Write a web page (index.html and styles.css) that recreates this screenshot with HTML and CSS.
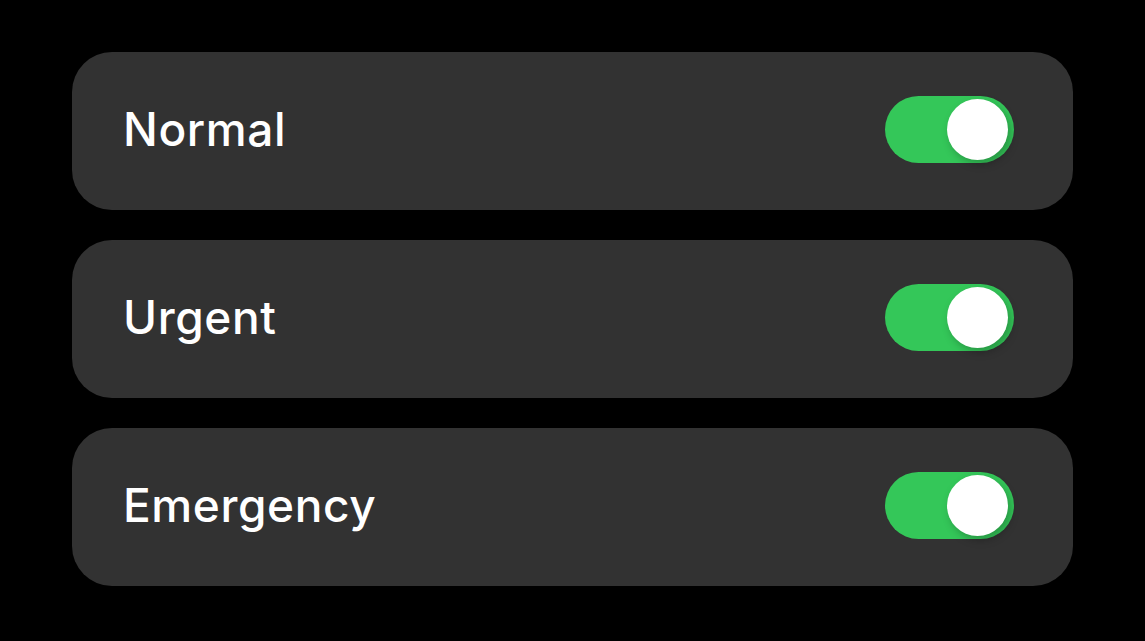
FILE: index.html
```html
<!DOCTYPE html>
<html lang="en">
<head>
<meta charset="UTF-8">
<meta name="viewport" content="width=device-width, initial-scale=1.0">
<title>Alert Levels</title>
<link rel="stylesheet" href="styles.css">
</head>
<body>

<div class="list">
    <div class="row">
        <span class="label">Normal</span>
        <div class="switch on"><div class="knob"></div></div>
    </div>

    <div class="row">
        <span class="label">Urgent</span>
        <div class="switch on"><div class="knob"></div></div>
    </div>

    <div class="row">
        <span class="label">Emergency</span>
        <div class="switch on"><div class="knob"></div></div>
    </div>
</div>

</body>
</html>
```

FILE: styles.css
```css
body {
    margin: 0;
    background: #000;
    color: #fff;
    font-family: 'Inter', 'Noto Sans', sans-serif;
}
.list {
    display: flex;
    flex-direction: column;
    gap: 30px;
    width: 1001px;
    padding: 52px 0 0 72px;
}
.row {
    display: flex;
    align-items: center;
    justify-content: space-between;
    height: 158px;
    padding: 0 59px 0 51px;
    background: #323232;
    border-radius: 40px;
    box-sizing: border-box;
}
.label { font-size: 46px; font-weight: 500; letter-spacing: 0.6px; margin-top: -4px; }
.switch {
    display: flex;
    align-items: center;
    justify-content: flex-end;
    width: 129px;
    height: 67px;
    padding: 0 6px;
    border-radius: 34px;
    background: #34c759;
    box-sizing: border-box;
    margin-top: -3px;
}
.knob {
    width: 61px;
    height: 61px;
    border-radius: 50%;
    background: #fff;
    box-shadow: 3px 4px 8px rgba(0,0,0,0.25);
}
```
